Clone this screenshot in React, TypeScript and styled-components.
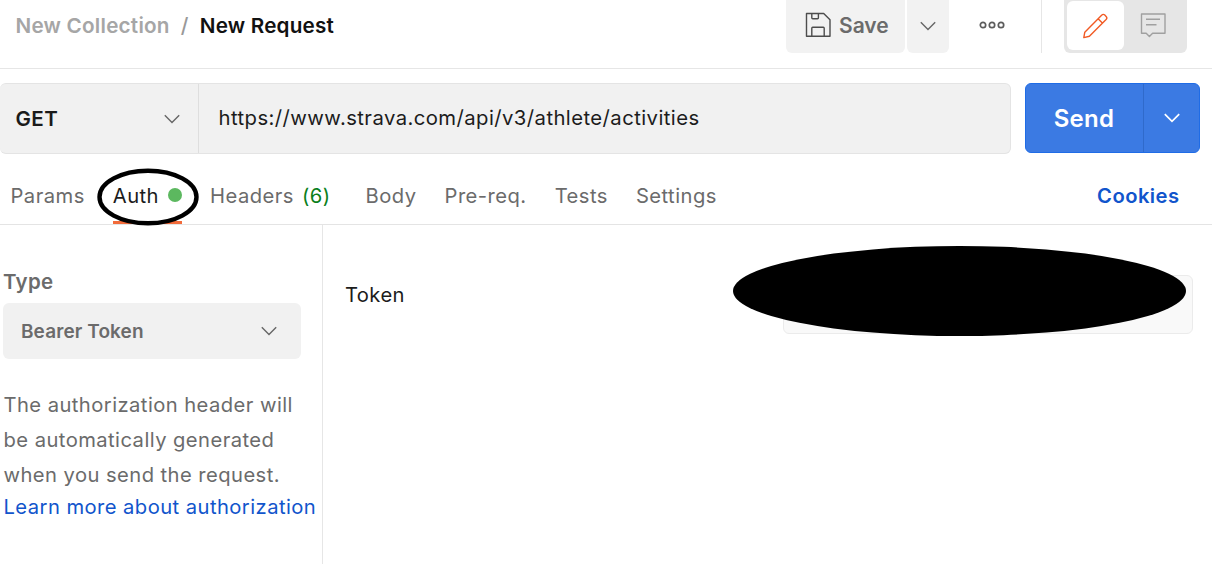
import React from "react";
import styled, { createGlobalStyle } from "styled-components";

const GlobalStyle = createGlobalStyle`
  *, *::before, *::after { box-sizing: border-box; }
  html, body, #root { margin: 0; height: 100%; }
  body {
    background: #fff;
    overflow: hidden;
    font-family: Inter, "Liberation Sans", sans-serif;
    font-weight: 400;
    color: #1c1c1c;
  }
  button { font: inherit; color: inherit; border: 0; margin: 0; padding: 0; background: none; }
`;

const Page = styled.div`
  position: relative;
  display: flex;
  flex-direction: column;
  width: 1212px;
  height: 564px;
  overflow: hidden;
  white-space: nowrap;
`;

const Header = styled.header`
  display: flex;
  height: 69px;
  padding-left: 15.5px;
  border-bottom: 1px solid #e6e6e6;
`;

const Breadcrumb = styled.nav`
  display: flex;
  flex: 1;
  height: 50px;
  align-items: center;
  font-size: 20.7px;
  font-weight: 600;
`;

const Crumb = styled.span<{ $current?: boolean }>`
  color: ${(p) => (p.$current ? "#111" : "#a6a6a6")};
  letter-spacing: ${(p) => (p.$current ? "0.2px" : "0.22px")};
`;

const Slash = styled.span`
  width: 30px;
  padding-left: 11px;
  font-weight: 500;
  color: #999;
`;

const HeaderActions = styled.div`
  display: flex;
  height: 53px;
`;

const SaveButton = styled.button`
  display: flex;
  align-items: center;
  width: 119px;
  padding: 0 0 3px 19px;
  gap: 8px;
  background: #f2f2f2;
  border-radius: 0 0 6px 6px;
  color: #6b6b6b;
  font-size: 21px;
  font-weight: 600;
`;

const SaveMenuButton = styled.button`
  display: flex;
  align-items: center;
  justify-content: center;
  width: 42px;
  margin-left: 2px;
  padding-bottom: 2px;
  background: #f2f2f2;
  border-radius: 0 0 6px 6px;
  color: #5c5c5c;
`;

const MoreButton = styled.button`
  display: flex;
  align-items: center;
  justify-content: center;
  width: 92px;
  padding: 0 7px 3px 0;
`;

const ModeSwitch = styled.div`
  display: flex;
  width: 171px;
  border-left: 1px solid #e6e6e6;
  padding-left: 22px;
`;

const ModeTrack = styled.div`
  display: flex;
  width: 122.5px;
  padding: 1px 3px 3px;
  border-radius: 0 0 6px 6px;
  background: #e6e6e6;
`;

const ModeOption = styled.button<{ $active?: boolean }>`
  display: flex;
  align-items: center;
  justify-content: center;
  width: 57px;
  height: 49px;
  border-radius: 6px;
  background: ${(p) => (p.$active ? "#fff" : "transparent")};
  color: ${(p) => (p.$active ? "#f15a24" : "#a0a0a0")};
`;

const RequestRow = styled.div`
  display: flex;
  height: 71px;
  margin-top: 14px;
`;

const UrlBar = styled.div`
  display: flex;
  width: 1011px;
  border: 1.5px solid #e4e4e4;
  border-left-width: 0;
  border-radius: 6px;
  background: #f1f1f1;
`;

const MethodSelect = styled.button`
  display: flex;
  align-items: center;
  justify-content: space-between;
  width: 199px;
  padding: 0 17px 0 15.5px;
  border-right: 1px solid #dedede;
  font-size: 20.6px;
  font-weight: 600;
  letter-spacing: 0.4px;
  color: #1a1a1a;
`;

const Url = styled.div`
  display: flex;
  align-items: center;
  padding: 0 0 2px 19.5px;
  font-size: 20.3px;
  letter-spacing: 0.43px;
`;

const SendGroup = styled.div`
  display: flex;
  width: 175px;
  height: 70px;
  margin-left: 14px;
  border: 1px solid #1f6ce6;
  border-radius: 6px;
  background: #3b7ae3;
  color: #fff;
`;

const SendButton = styled.button`
  width: 118px;
  padding-right: 1px;
  border-right: 1px solid #2f6acb;
  font-size: 24px;
  font-weight: 600;
  letter-spacing: 0.3px;
`;

const SendMenuButton = styled.button`
  display: flex;
  flex: 1;
  align-items: center;
  justify-content: center;
`;

const Tabs = styled.div`
  display: flex;
  height: 71px;
  padding: 12px 0 0 10.5px;
  border-bottom: 1px solid #e4e4e4;
  font-size: 20.2px;
`;

const Tab = styled.button<{ $active?: boolean; $gap: number }>`
  display: flex;
  align-items: center;
  height: 58px;
  margin-right: ${(p) => p.$gap}px;
  padding-top: ${(p) => (p.$active ? 3 : 0)}px;
  border-bottom: ${(p) => (p.$active ? "3px solid #f26b3a" : "0")};
  color: ${(p) => (p.$active ? "#1c1c1c" : "#6b6b6b")};
  letter-spacing: 0.46px;
`;

const StatusDot = styled.i`
  width: 14px;
  height: 14px;
  margin-left: 9px;
  border-radius: 50%;
  background: #5cb85f;
`;

const Count = styled.span`
  margin-left: 8px;
  color: #0a7f1b;
`;

const Cookies = styled.a`
  display: flex;
  align-items: center;
  height: 58px;
  margin-left: auto;
  padding-right: 32.5px;
  font-weight: 600;
  letter-spacing: 0.45px;
  color: #1155cc;
`;

const Body = styled.main`
  display: flex;
  flex: 1;
`;

const Sidebar = styled.aside`
  width: 323px;
  padding: 43px 0 0 3px;
  border-right: 1px solid #e6e6e6;
`;

const FieldLabel = styled.div`
  height: 35px;
  font-size: 20.5px;
  font-weight: 600;
  letter-spacing: 0.3px;
  line-height: 27px;
  color: #6b6b6b;
`;

const TypeSelect = styled.button`
  display: flex;
  align-items: center;
  justify-content: space-between;
  width: 298px;
  height: 56px;
  padding: 0 23px 0 18px;
  border-radius: 6px;
  background: #f1f1f1;
  color: #6b6b6b;
  font-size: 19px;
  font-weight: 600;
  letter-spacing: 0.1px;
`;

const Help = styled.p`
  margin: 28px 0 0;
  padding-left: 0.5px;
  font-size: 20.2px;
  line-height: 35px;
  letter-spacing: 0.44px;
  color: #6b6b6b;
`;

const HelpLink = styled.a`
  display: block;
  font-size: 20.2px;
  line-height: 29px;
  padding-left: 0.5px;
  letter-spacing: 0.44px;
  color: #1155cc;
`;

const AuthForm = styled.section`
  display: flex;
  flex: 1;
  justify-content: space-between;
  padding: 50px 19px 0 22px;
`;

const TokenLabel = styled.label`
  font-size: 20.2px;
  line-height: 39px;
  letter-spacing: 0.4px;
`;

const TokenField = styled.div`
  width: 410px;
  height: 59px;
  border: 1px solid #ebebeb;
  border-radius: 6px;
  background: #f9f9f9;
`;

const AuthRing = styled.svg`
  position: absolute;
  left: 97px;
  top: 168px;
`;

const Redaction = styled.div`
  position: absolute;
  left: 733px;
  top: 245.5px;
  width: 453px;
  height: 90px;
  border-radius: 50%;
  background: #000;
`;

const Chevron = ({ color = "#666", weight = 1.4 }: { color?: string; weight?: number }) => (
  <svg width="18" height="12" viewBox="0 0 18 12" fill="none" stroke={color} strokeWidth={weight}>
    <path d="M1.8 2.2 9 9.4l7.2-7.2" />
  </svg>
);

const SaveIcon = () => (
  <svg width="26" height="26" viewBox="0 0 26 26" fill="none" stroke="#4d4d4d" strokeWidth="1.4" strokeLinejoin="round">
    <path d="M1.5 1.5h17.2L25 7.8v16.4H1.5zM6.8 24.2v-8q0-.9.9-.9h10.6q.9 0 .9.9v8M6.8 1.5v4.3q0 .9.9.9h4.8q.9 0 .9-.9V1.5" />
  </svg>
);

const PencilIcon = () => (
  <svg width="26" height="26" viewBox="0 0 26 26" fill="none" stroke="currentColor" strokeWidth="1.4" strokeLinejoin="round">
    <path d="M.8 24.6 1.8 19.2 18.6 2.2q1.6-1.6 3.2-.1l1.3 1.3q1.5 1.6 0 3.2L6.4 23.2zM15.1 5.7l4.5 4.5" />
  </svg>
);

const CommentIcon = () => (
  <svg width="26" height="26" viewBox="0 0 26 26" fill="none" stroke="currentColor" strokeWidth="1.4" strokeLinejoin="round">
    <path d="M1.5 1h23.5v19.2H12.6L9.4 23.5l-3.2-3.3H1.5zM6 6.3h14M6 11.8h10.5" />
  </svg>
);

const MoreIcon = () => (
  <svg width="26" height="10" viewBox="0 0 26 10" fill="none" stroke="#5c5c5c" strokeWidth="1.7">
    <circle cx="4" cy="5" r="2.7" />
    <circle cx="13" cy="5" r="2.7" />
    <circle cx="22" cy="5" r="2.7" />
  </svg>
);

export default function App() {
  return (
    <>
      <GlobalStyle />
      <Page>
        <Header>
          <Breadcrumb>
            <Crumb>New Collection</Crumb>
            <Slash>/</Slash>
            <Crumb $current>New Request</Crumb>
          </Breadcrumb>
          <HeaderActions>
            <SaveButton><SaveIcon />Save</SaveButton>
            <SaveMenuButton><Chevron /></SaveMenuButton>
            <MoreButton><MoreIcon /></MoreButton>
            <ModeSwitch>
              <ModeTrack>
                <ModeOption $active><PencilIcon /></ModeOption>
                <ModeOption><CommentIcon /></ModeOption>
              </ModeTrack>
            </ModeSwitch>
          </HeaderActions>
        </Header>
        <RequestRow>
          <UrlBar>
            <MethodSelect>GET<Chevron /></MethodSelect>
            <Url>https://www.strava.com/api/v3/athlete/activities</Url>
          </UrlBar>
          <SendGroup>
            <SendButton>Send</SendButton>
            <SendMenuButton><Chevron color="#fff" weight={1.7} /></SendMenuButton>
          </SendGroup>
        </RequestRow>
        <Tabs>
          <Tab $gap={28}>Params</Tab>
          <Tab $active $gap={28}>Auth<StatusDot /></Tab>
          <Tab $gap={35}>Headers<Count>(6)</Count></Tab>
          <Tab $gap={28}>Body</Tab>
          <Tab $gap={28}>Pre-req.</Tab>
          <Tab $gap={28}>Tests</Tab>
          <Tab $gap={0}>Settings</Tab>
          <Cookies>Cookies</Cookies>
        </Tabs>
        <Body>
          <Sidebar>
            <FieldLabel>Type</FieldLabel>
            <TypeSelect>Bearer Token<Chevron /></TypeSelect>
            <Help>
              The authorization header will<br />
              be automatically generated<br />
              when you send the request.
            </Help>
            <HelpLink>Learn more about authorization</HelpLink>
          </Sidebar>
          <AuthForm>
            <TokenLabel>Token</TokenLabel>
            <TokenField />
          </AuthForm>
        </Body>
        <AuthRing width="102" height="58" viewBox="0 0 102 58" fill="none" stroke="#000" strokeWidth="4.4">
          <ellipse cx="51" cy="29" rx="48.5" ry="26.3" />
        </AuthRing>
        <Redaction />
      </Page>
    </>
  );
}
